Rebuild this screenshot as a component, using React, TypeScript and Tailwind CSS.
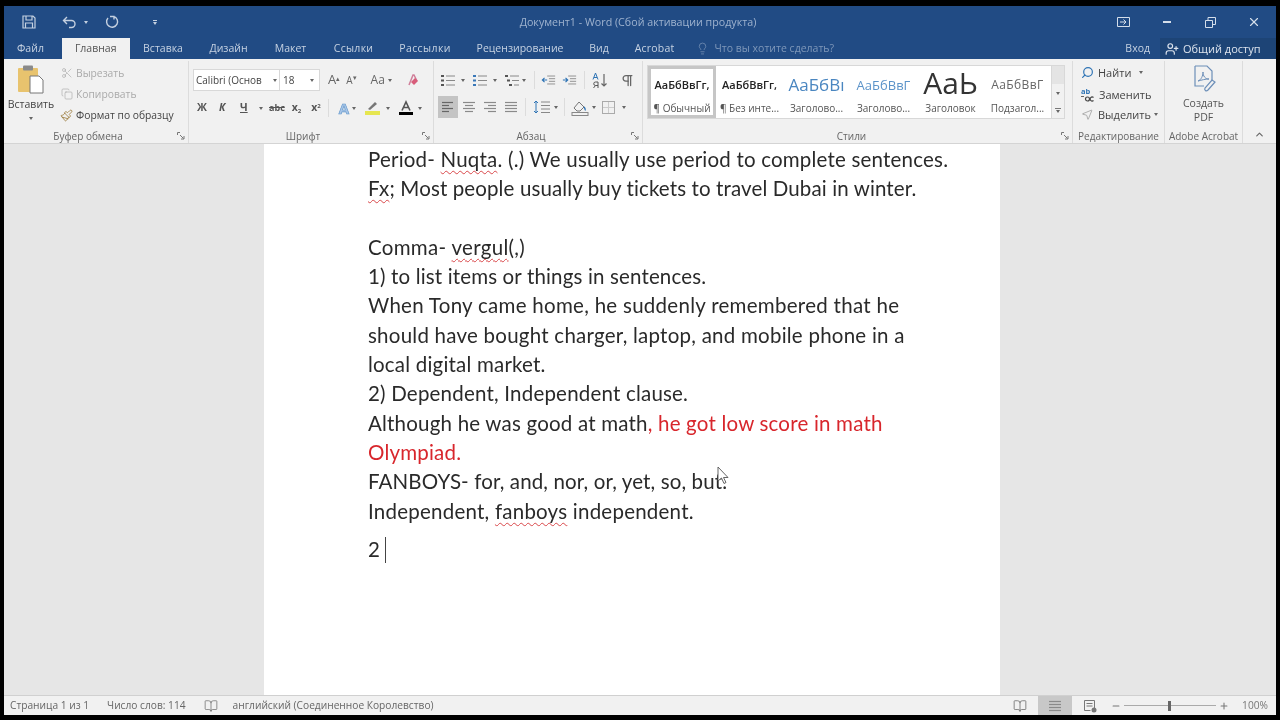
import { Scissors, Copy, Paintbrush, Lightbulb, Search, MousePointer2, Minus, Plus, X, ChevronUp, BookOpen, UserPlus, Pilcrow } from 'lucide-react'
import type { ReactNode } from 'react'

const uiFont = "font-['Open_Sans','Noto_Sans',sans-serif]"
const docFont = "font-['Lato','Open_Sans',sans-serif]"

const tabs = [
  { t: 'Вставка', w: 'w-[67px]' },
  { t: 'Дизайн', w: 'w-[64px]' },
  { t: 'Макет', w: 'w-[60px]' },
  { t: 'Ссылки', w: 'w-[66px] tracking-[0.3px]' },
  { t: 'Рассылки', w: 'w-[77px] tracking-[0.4px]' },
  { t: 'Рецензирование', w: 'w-[113px]' },
  { t: 'Вид', w: 'w-[45px]' },
  { t: 'Acrobat', w: 'w-[66px] tracking-[0.2px]' },
]

const styles = [
  { sample: 'АаБбВвГг,', name: '¶ Обычный', cls: 'text-[11px] leading-[20px] h-[24px] font-semibold text-[#222]', w: 'w-[68px] border-[3px] border-[#c6c6c6] pt-[6px]' },
  { sample: 'АаБбВвГг,', name: '¶ Без инте...', cls: 'text-[11px] leading-[20px] h-[24px] font-semibold text-[#222]', w: 'w-[67px] pt-[9px] pb-[3px]' },
  { sample: 'АаБбВı', name: 'Заголово...', cls: 'text-[17px] leading-[20px] h-[24px] text-[#4a86c0]', w: 'w-[67px] pt-[9px] pb-[3px]' },
  { sample: 'АаБбВвГ', name: 'Заголово...', cls: 'text-[13px] leading-[20px] h-[24px] text-[#5b93c9]', w: 'w-[67px] pt-[9px] pb-[3px]' },
  { sample: 'АаЬ', name: 'Заголовок', cls: 'text-[30px] leading-[34px] h-[34px] text-[#333]', w: 'w-[67px] pb-[3px]' },
  { sample: 'АаБбВвГ', name: 'Подзагол...', cls: 'text-[12px] leading-[20px] h-[24px] text-[#666] tracking-[0.4px]', w: 'w-[67px] pt-[9px] pb-[3px]' },
]

function Launcher() {
  return (
    <svg width="8" height="8" viewBox="0 0 8 8" className="absolute right-[3px] bottom-[3px] text-[#777]">
      <path d="M0.5 3V0.5H3M3 3l3.5 3.5M4 7h3V4" fill="none" stroke="currentColor" strokeWidth="1" />
    </svg>
  )
}

function Group({ label, w, launcher, pad = '', children }: { label: string; w: string; launcher?: boolean; pad?: string; children: ReactNode }) {
  return (
    <div className={`${w} relative flex flex-col border-r border-[#dcdcdc] shrink-0 mt-[2px]`}>
      <div className="flex-1 min-h-0">{children}</div>
      <div className={`h-[13px] text-center text-[10px] leading-[13px] text-[#666] ${pad}`}>{label}</div>
      {launcher && <Launcher />}
    </div>
  )
}

function Caret({ className = '' }: { className?: string }) {
  return <span className={`inline-block w-0 h-0 border-x-[2.5px] border-x-transparent border-t-[3px] border-t-[#666] ${className}`} />
}

function ListIcon({ kind }: { kind: 'bullet' | 'num' | 'multi' }) {
  const c = kind === 'num' ? '#3a78b8' : '#555'
  return (
    <svg width="16" height="15" viewBox="0 0 16 15">
      <g fill={c}>
        <rect x="1" y="2" width="3" height="2" />
        <rect x={kind === 'multi' ? 3 : 1} y="6.5" width="3" height="2" />
        <rect x={kind === 'multi' ? 5 : 1} y="11" width="3" height="2" />
      </g>
      <g stroke="#888" strokeWidth="1">
        <path d="M6 3h9" />
        <path d={kind === 'multi' ? 'M8 7.5h7' : 'M6 7.5h9'} />
        <path d={kind === 'multi' ? 'M10 12h5' : 'M6 12h9'} />
      </g>
    </svg>
  )
}

function AlignIcon({ mode }: { mode: 'l' | 'c' | 'r' | 'j' }) {
  const rows = mode === 'l'
    ? ['M2 2.5h11', 'M2 5.5h7', 'M2 8.5h11', 'M2 11.5h7']
    : mode === 'c'
      ? ['M2 2.5h12', 'M4 5.5h8', 'M2 8.5h12', 'M4 11.5h8']
      : mode === 'r'
        ? ['M2 2.5h12', 'M6 5.5h8', 'M2 8.5h12', 'M6 11.5h8']
        : ['M2 2.5h12', 'M2 5.5h12', 'M2 8.5h12', 'M2 11.5h12']
  return (
    <svg width="16" height="14" viewBox="0 0 16 14">
      {rows.map((d) => <path key={d} d={d} stroke={mode === 'l' ? '#666' : '#8a8a8a'} strokeWidth="1.2" />)}
    </svg>
  )
}

function IndentIcon({ dir }: { dir: 'in' | 'out' }) {
  return (
    <svg width="15" height="14" viewBox="0 0 17 14">
      <path d="M7 2.5h9M9 5.5h7M9 8.5h7M7 11.5h9" stroke="#888" strokeWidth="1" />
      <path d={dir === 'out' ? 'M7 7H2M4 4.5 1.5 7 4 9.5' : 'M1 7h5M4 4.5 6.5 7 4 9.5'} stroke="#2f74b5" strokeWidth="1.3" fill="none" />
    </svg>
  )
}

function Clipboard() {
  return (
    <svg width="28" height="30" viewBox="0 0 28 30">
      <rect x="1" y="3" width="20" height="24" rx="1" fill="#e8c36e" />
      <rect x="6" y="0.5" width="10" height="5" rx="1" fill="#8a8a8a" />
      <path d="M13 11h9l4 4v13H13z" fill="#fff" stroke="#777" strokeWidth="1" />
    </svg>
  )
}

function ClipboardGroup() {
  return (
    <div className="flex h-full pl-[5px] pt-[4px]">
      <div className="w-[44px] flex flex-col items-center shrink-0">
        <Clipboard />
        <span className="text-[10.5px] leading-[13px] mt-[3px] text-[#444]">Вставить</span>
        <Caret className="mt-[6px]" />
      </div>
      <div className="flex flex-col pl-[8px] gap-[7px] text-[10.3px] leading-[14px] pt-[1px]">
        <div className="flex items-center gap-[3px] text-[#aaa]"><Scissors size={12} strokeWidth={1.3} className="-scale-y-100" /> Вырезать</div>
        <div className="flex items-center gap-[3px] text-[#aaa]"><Copy size={12} strokeWidth={1.3} /> Копировать</div>
        <div className="flex items-center gap-[3px] text-[#444] whitespace-nowrap -ml-px"><Paintbrush size={13} strokeWidth={1.5} className="text-[#9a7a3a]" /> Формат по образцу</div>
      </div>
    </div>
  )
}

function FontGroup() {
  return (
    <div className="pl-[4px] pt-[8px]">
      <div className="flex items-center h-[22px]">
        <div className="flex items-center justify-between w-[87px] h-[22px] bg-white border border-[#d8d8d8] px-[2px] text-[10px] text-[#444] whitespace-nowrap">
          Calibri (Основ <Caret />
        </div>
        <div className="flex items-center justify-between w-[40px] h-[22px] bg-white border border-[#d8d8d8] border-l-0 px-[3px] text-[10px] text-[#444]">
          18 <Caret className="mr-[2px]" />
        </div>
        <span className="ml-[8px] text-[13px] text-[#666]">A<sup className="text-[7px]">▴</sup></span>
        <span className="ml-[6px] text-[10px] text-[#666]">A<sup className="text-[7px]">▾</sup></span>
        <span className="ml-[14px] text-[12px] text-[#666]">Aa</span>
        <Caret className="ml-[3px]" />
        <svg width="16" height="16" viewBox="0 0 16 16" className="ml-[12px]">
          <path d="M5 13 9 3h1l3 6" stroke="#d07f9a" strokeWidth="1.5" fill="none" />
          <path d="m7 10 4-4 3 3-4 4z" fill="#d85c7a" />
        </svg>
      </div>
      <div className="flex items-center h-[22px] mt-[6px] text-[#555] text-[10.5px] font-bold">
        <span className="ml-[4px] w-[20px]">Ж</span>
        <span className="italic w-[18px] ml-[2px]">К</span>
        <span className="underline w-[11px] ml-[3px]">Ч</span>
        <Caret className="ml-[8px]" />
        <span className="ml-[6px] text-[9px] line-through">abc</span>
        <span className="ml-[7px]">x<sub className="text-[6px]">2</sub></span>
        <span className="ml-[10px]">x<sup className="text-[6px]">2</sup></span>
        <span className="ml-[7px] h-[18px] border-l border-[#dcdcdc]" />
        <span className="ml-[10px] text-[15px] font-bold text-[#a9c6e8] [-webkit-text-stroke:0.6px_#5b93c9]">A</span>
        <Caret className="ml-[3px]" />
        <svg width="17" height="16" viewBox="0 0 17 16" className="ml-[8px]">
          <path d="m4 9 7-7 2 2-7 6z" fill="#777" />
          <rect x="1" y="11" width="15" height="4" fill="#e6e650" />
        </svg>
        <Caret className="ml-[5px]" />
        <svg width="16" height="16" viewBox="0 0 16 16" className="ml-[8px]">
          <path d="M4 10.5 8 2l4 8.5M5.500 7.500h5" fill="none" stroke="#555" strokeWidth="1.6" />
          <rect x="1" y="12" width="14" height="3" fill="#000" />
        </svg>
        <Caret className="ml-[4px]" />
      </div>
    </div>
  )
}

function ParagraphGroup() {
  return (
    <div className="pl-[6px] pt-[9px]">
      <div className="flex items-center h-[20px]">
        <ListIcon kind="bullet" />
        <Caret className="ml-[5px]" />
        <span className="ml-[7px] flex"><ListIcon kind="num" /></span>
        <Caret className="ml-[5px]" />
        <span className="ml-[7px] flex"><ListIcon kind="multi" /></span>
        <Caret className="ml-[2px]" />
        <span className="ml-[8px] h-[18px] border-l border-[#dcdcdc]" />
        <span className="ml-[6px] flex"><IndentIcon dir="out" /></span>
        <span className="ml-[6px] flex"><IndentIcon dir="in" /></span>
        <span className="ml-[7px] h-[18px] border-l border-[#dcdcdc]" />
        <svg width="16" height="17" viewBox="0 0 16 17" className="ml-[7px]">
          <path d="M1 7.500 3.500 1 6 7.500M2 5.500h3" fill="none" stroke="#2f74b5" strokeWidth="1" />
          <path d="M6 16V10H3.500a1.700 1.700 0 0 0 0 3.500H6M3.500 13.500 1.500 16" fill="none" stroke="#555" strokeWidth="1" />
          <path d="M12 2v12M9.500 11.500 12 14l2.500-2.500" fill="none" stroke="#666" strokeWidth="1.2" />
        </svg>
        <Pilcrow size={15} strokeWidth={2} className="ml-[12px] text-[#666]" />
      </div>
      <div className="flex items-center h-[22px] mt-[6px]">
        <span className="-ml-[2px] flex items-center justify-center w-[20px] h-[22px] bg-[#c4c4c4]"><AlignIcon mode="l" /></span>
        <span className="ml-[3px] flex"><AlignIcon mode="c" /></span>
        <span className="ml-[5px] flex"><AlignIcon mode="r" /></span>
        <span className="ml-[5px] flex"><AlignIcon mode="j" /></span>
        <span className="ml-[6px] h-[18px] border-l border-[#dcdcdc]" />
        <svg width="18" height="16" viewBox="0 0 18 16" className="ml-[7px]">
          <path d="M3 2v12M1 4l2-2 2 2M1 12l2 2 2-2" fill="none" stroke="#2f74b5" strokeWidth="1" />
          <path d="M8 3h9M8 6.500h9M8 10h9M8 13.500h9" stroke="#888" />
        </svg>
        <Caret className="ml-[3px]" />
        <span className="ml-[6px] h-[18px] border-l border-[#dcdcdc]" />
        <svg width="18" height="17" viewBox="0 0 18 17" className="ml-[6px]">
          <path d="m3 9 5-6 5 5-4 4H6z" fill="none" stroke="#777" strokeWidth="1" />
          <path d="M13 8c1 1.500 2 2.500 1 3.500" stroke="#2f74b5" strokeWidth="1.5" fill="none" />
          <rect x="1" y="13.500" width="16" height="3" fill="none" stroke="#888" />
        </svg>
        <Caret className="ml-[3px]" />
        <span className="ml-[6px] grid grid-cols-2 w-[13px] h-[13px] border border-[#aaa] [&>i]:border-[#ccc]">
          <i className="border-r border-b" /><i className="border-b" /><i className="border-r" /><i />
        </span>
        <Caret className="ml-[7px]" />
      </div>
    </div>
  )
}

function StylesGroup() {
  return (
    <div className="pt-[4px] pl-[4px]">
      <div className="flex h-[54px] w-[418px]">
        <div className="flex flex-1 bg-white border border-[#d8d8d8]">
          {styles.map((s) => (
            <div
              key={s.sample + s.name}
              className={`${s.w} shrink-0 flex flex-col items-center justify-between whitespace-nowrap`}
            >
              <span className={s.cls}>{s.sample}</span>
              <span className="text-[10px] leading-[14px] text-[#555]">{s.name}</span>
            </div>
          ))}
        </div>
        <div className="w-[13px] shrink-0 flex flex-col border border-l-0 border-[#d8d8d8] items-center text-[#666]">
          <div className="h-[18px] w-full bg-[#e4e4e4]" />
          <div className="h-[18px] w-full flex items-center justify-center"><Caret /></div>
          <div className="h-[16px] w-full flex flex-col items-center justify-center gap-[1px]"><span className="w-[6px] border-t border-[#777]" /><Caret /></div>
        </div>
      </div>
    </div>
  )
}

function EditingGroup() {
  return (
    <div className="pl-[7px] pt-[4px] flex flex-col gap-[6px] text-[11px] leading-[15px] text-[#444]">
      <div className="flex items-center gap-[3px]"><Search size={13} strokeWidth={2.2} className="-scale-x-100 text-[#2f74b5] ml-[1px] mr-[1px]" /> Найти <Caret className="ml-[5px]" /></div>
      <div className="flex items-center gap-[3px]">
        <svg width="15" height="16" viewBox="0 0 15 16" className="mr-px">
          <text x="1" y="8" fontSize="7.500" fontWeight="700" fontFamily="Open Sans" fill="#2f74b5">ab</text>
          <path d="M1 10.500h3" stroke="#666" />
          <circle cx="7.500" cy="13" r="2" fill="none" stroke="#444" strokeWidth="1.200" />
          <path d="M13.500 11.500a2 2 0 1 0 0 3" fill="none" stroke="#444" strokeWidth="1.200" />
        </svg>
        Заменить
      </div>
      <div className="flex items-center gap-[3px] -mt-px"><MousePointer2 size={13} strokeWidth={1} className="-scale-x-100 text-[#777] ml-[1px] mr-[1px]" /> Выделить <Caret /></div>
    </div>
  )
}

function AcrobatGroup() {
  return (
    <div className="flex flex-col items-center pt-[3px] text-[10.5px] leading-[14px] text-[#555]">
      <svg width="28" height="29" viewBox="0 0 28 29" className="mb-[3px]">
        <path d="M5 2h12l5 5v9M5 2v20h9" fill="none" stroke="#6d8fb8" strokeWidth="1.2" />
        <path d="M8 17c3-1 5-5 5-9 0 4 2 7 6 7-4 0-7 1-11 2z" fill="none" stroke="#6d8fb8" />
        <path d="m18 26 7-8-3-2-7 8c-1 2 1 4 3 2z" fill="none" stroke="#6d8fb8" strokeWidth="1.2" />
      </svg>
      <span>Создать</span>
      <span>PDF</span>
    </div>
  )
}

function Ribbon() {
  return (
    <div className="flex h-[85px] bg-[#f1f1f1] border-b border-[#d4d4d4] shrink-0">
      <Group label="Буфер обмена" w="w-[185px]" launcher pad="pr-[16px]"><ClipboardGroup /></Group>
      <Group label="Шрифт" w="w-[245px]" launcher pad="pr-[16px]"><FontGroup /></Group>
      <Group label="Абзац" w="w-[209px]" launcher pad="pr-[14px]"><ParagraphGroup /></Group>
      <Group label="Стили" w="w-[430px]" launcher pad="pr-[12px]"><StylesGroup /></Group>
      <Group label="Редактирование" w="w-[92px]"><EditingGroup /></Group>
      <Group label="Adobe Acrobat" w="w-[78px]"><AcrobatGroup /></Group>
      <div className="flex-1 flex items-end justify-center pb-[3px]"><ChevronUp size={11} strokeWidth={2.5} className="text-[#666]" /></div>
    </div>
  )
}

function Line({ children, className = '' }: { children?: ReactNode; className?: string }) {
  return <p className={`h-[29.3px] whitespace-nowrap ${className}`}>{children}</p>
}

function Typo({ children }: { children: ReactNode }) {
  return <span className="underline decoration-wavy decoration-[#d9474a] decoration-1 underline-offset-[3px] [text-decoration-skip-ink:none]">{children}</span>
}

export default function App() {
  return (
    <div className={`w-[1280px] h-[720px] bg-black overflow-hidden pt-[6px] px-[4px] pb-[5px] ${uiFont}`}>
      <div className="relative w-full h-full flex flex-col bg-[#e6e6e6] blur-[0.35px]">
        {/* title bar */}
        <div className="h-[32px] bg-[#214b84] flex items-center relative text-[#9fb3cf] shrink-0">
          <svg width="14" height="14" viewBox="0 0 14 14" className="ml-[18px] text-[#c4d0e0]">
            <path d="M1 1h10l2 2v10H1zM4 1v4h6V1M3.500 13V8h7v5" fill="none" stroke="currentColor" strokeWidth="1.2" />
          </svg>
          <svg width="16" height="13" viewBox="0 0 16 13" className="ml-[26px] text-[#c4d0e0]">
            <path d="M5 1 1.500 4.500 5 8M2 4.500h7.500a3 3 0 0 1 0 7H7" fill="none" stroke="currentColor" strokeWidth="1.4" />
          </svg>
          <Caret className="ml-[6px] border-t-[#c4d0e0]" />
          <svg width="14" height="14" viewBox="0 0 14 14" className="ml-[17px] text-[#c4d0e0]">
            <path d="M5 1.500h4v3M9 1.500A5.500 5.500 0 1 1 3 3" fill="none" stroke="currentColor" strokeWidth="1.4" />
          </svg>
          <span className="ml-[34px] flex flex-col items-center gap-[1px]"><span className="w-[4px] border-t border-[#c4d0e0]" /><Caret className="border-t-[#c4d0e0]" /></span>
          <span className="absolute left-0 right-0 text-center text-[10.7px] pr-[4px]">Документ1 - Word (Сбой активации продукта)</span>
          <div className="ml-auto flex items-center text-[#d5deea]">
            <svg width="13" height="10" viewBox="0 0 13 10" className="mr-[33px]">
              <path d="M.5.500h12v9H.5zM3 5h6M6.500 2.500 9 5 6.500 7.500" fill="none" stroke="currentColor" />
            </svg>
            <span className="w-[8px] border-t-2 border-[#d5deea] mr-[34px]" />
            <svg width="11" height="11" viewBox="0 0 11 11" className="mr-[31px]">
              <path d="M.5 3.500h7v7h-7zM3 3.500v-3h7.500v7H8" fill="none" stroke="currentColor" />
            </svg>
            <X size={14} strokeWidth={2} className="mr-[15px]" />
          </div>
        </div>
        {/* tabs */}
        <div className="h-[21px] bg-[#214b84] flex items-stretch text-[10.5px] leading-[21px] text-[#c6d2e2] shrink-0">
          <span className="px-[13px]">Файл</span>
          <span className="ml-[5px] px-[13px] bg-[#f1f1f1] text-[#555]">Главная</span>
          {tabs.map((t) => <span key={t.t} className={`${t.w} text-center`}>{t.t}</span>)}
          <span className="ml-[8px] flex items-center gap-[6px] text-[#7e97b9]"><Lightbulb size={13} strokeWidth={1.3} /> Что вы хотите сделать?</span>
          <span className="ml-auto pr-[10px]">Вход</span>
          <span className="w-[116px] bg-[#1d4476] flex items-center gap-[4px] pl-[5px] text-[11px] text-[#dde4ee]"><UserPlus size={14} strokeWidth={2} /> Общий доступ</span>
        </div>
        <Ribbon />
        {/* document */}
        <div className="flex-1 min-h-0 flex justify-center overflow-hidden pr-[16px]">
          <div className={`w-[736px] h-full bg-white pl-[104px] pt-[1px] text-[20.5px] leading-[29.3px] tracking-[0.2px] text-[#2a2a2a] ${docFont}`}>
            <Line>Period- <Typo>Nuqta</Typo>. (.) We usually use period to complete sentences.</Line>
            <Line className="tracking-[0.12px]"><Typo>Fx</Typo>; Most people usually buy tickets to travel Dubai in winter.</Line>
            <Line />
            <Line className="tracking-[0.3px]">Comma- <Typo>vergul</Typo>(,)</Line>
            <Line className="tracking-[0.15px]">1) to list items or things in sentences.</Line>
            <Line className="tracking-[0.28px]">When Tony came home, he suddenly remembered that he</Line>
            <Line className="tracking-[0.24px]">should have bought charger, laptop, and mobile phone in a</Line>
            <Line>local digital market.</Line>
            <Line>2) Dependent, Independent clause.</Line>
            <Line>Although he was good at math<span className="text-[#d8262c]">, he got low score in math</span></Line>
            <Line className="text-[#d8262c]">Olympiad.</Line>
            <Line className="tracking-[0.12px]">FANBOYS- for, and, nor, or, yet, so, but.</Line>
            <Line className="tracking-[0.23px]">Independent, <Typo>fanboys</Typo> independent.</Line>
            <Line className="mt-[9px] flex items-center">2<span className="ml-[5px] h-[26px] border-l border-[#444]" /></Line>
          </div>
        </div>
        {/* status bar */}
        <div className="h-[20px] bg-[#f1f1f1] border-t border-[#d0d0d0] flex items-center text-[10.2px] text-[#666] shrink-0">
          <span className="ml-[6px]">Страница 1 из 1</span>
          <span className="ml-[18px]">Число слов: 114</span>
          <BookOpen size={14} strokeWidth={1.2} className="ml-[18px]" />
          <span className="ml-[15px]">английский (Соединенное Королевство)</span>
          <div className="ml-auto flex items-center h-full text-[#777]">
            <BookOpen size={14} strokeWidth={1.5} className="mr-[11px]" />
            <span className="flex items-center justify-center w-[34px] h-full bg-[#c8c8c8]"><AlignIcon mode="j" /></span>
            <svg width="14" height="14" viewBox="0 0 14 14" className="ml-[11px]">
              <path d="M1.500 1.500h10v8M1.500 1.500v10h6M3.500 4.500h6M3.500 7h6" fill="none" stroke="currentColor" />
              <circle cx="11" cy="11" r="2.500" fill="currentColor" />
            </svg>
            <Minus size={10} strokeWidth={2.5} className="ml-[14px]" />
            <span className="ml-[3px] w-[92px] border-t border-[#aaa] relative">
              <span className="absolute left-[44px] -top-[5px] w-[3px] h-[10px] bg-[#666]" />
            </span>
            <Plus size={10} strokeWidth={2.5} className="ml-[3px]" />
            <span className="ml-[13px] mr-[8px]">100%</span>
          </div>
        </div>
        {/* mouse pointer */}
        <svg width="12" height="19" viewBox="0 0 12 19" className="absolute left-[713px] top-[460px]">
          <path d="M1 1v14l3.500-3 2.500 5.500 2-1-2.500-5H11z" fill="#fff" stroke="#555" strokeWidth="0.9" />
        </svg>
      </div>
    </div>
  )
}
